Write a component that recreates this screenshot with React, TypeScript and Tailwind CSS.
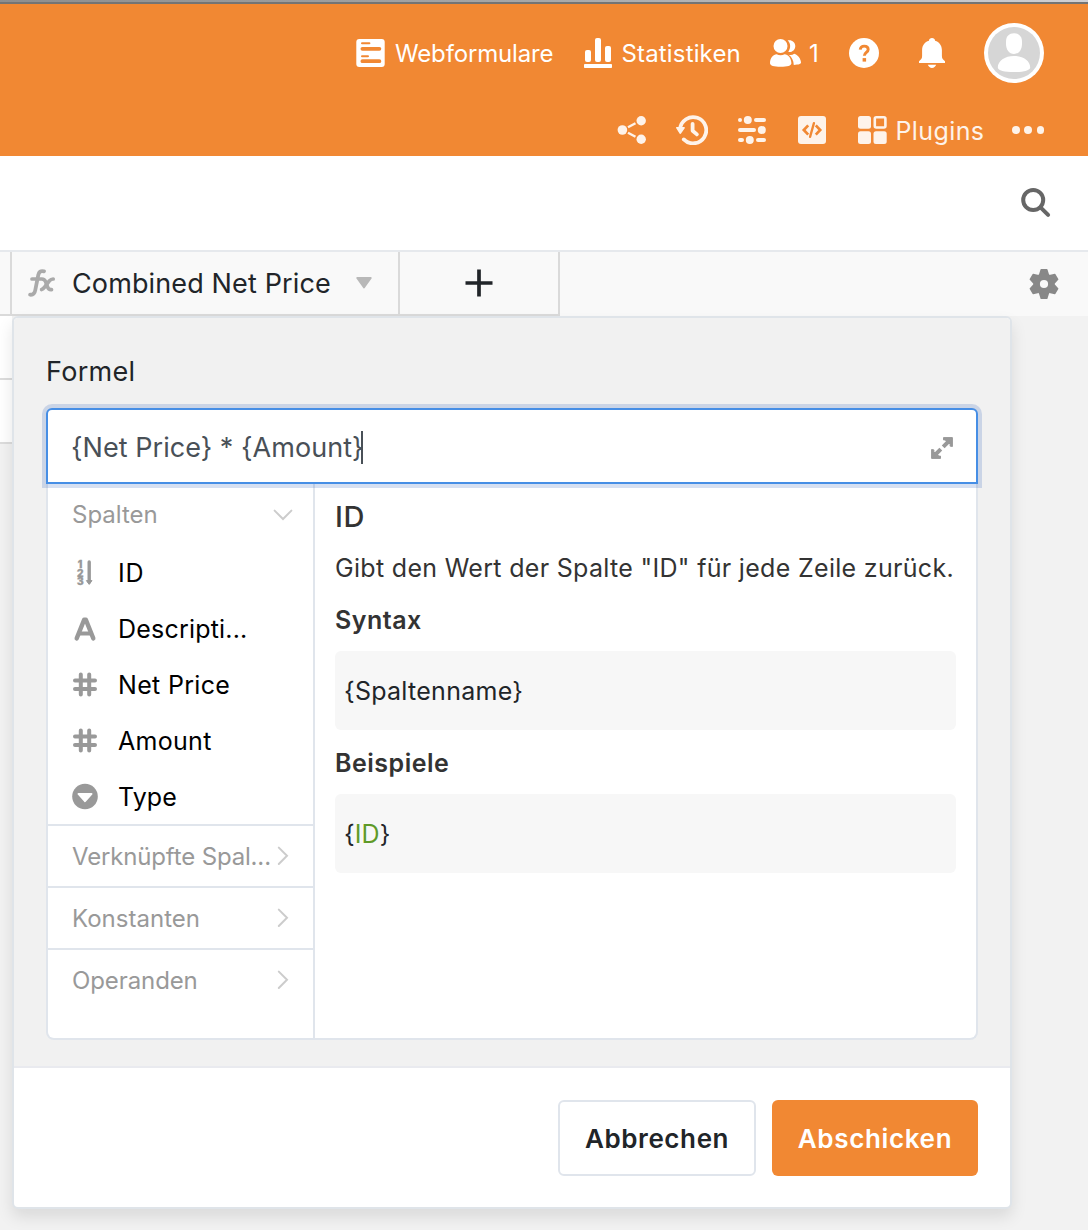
import React from "react";

function FormIcon() {
  return (
    <svg className="h-7 w-[29px] shrink-0" viewBox="0 0 29 28">
      <rect x="0.3" width="28.4" height="28" rx="3" fill="#fff" />
      <g stroke="#f18833" strokeLinecap="round">
        <path d="M6 4.2h7.4M6 17.2h6" strokeWidth="2" />
        <path d="M6.4 9.8h17M6.4 22.2h17" strokeWidth="3.8" />
      </g>
    </svg>
  );
}

function ChartIcon() {
  return (
    <svg className="h-[30px] w-7 shrink-0" viewBox="0 0 28 30" fill="#fff">
      <rect x="0" y="26" width="28" height="4" rx="0.8" />
      <rect x="1" y="12" width="6" height="12" rx="2" />
      <rect x="11" y="0" width="6" height="24" rx="2" />
      <rect x="21" y="8" width="6" height="16" rx="2" />
    </svg>
  );
}

function UsersIcon() {
  return (
    <svg className="h-7 w-8 shrink-0" viewBox="0 0 32 28" fill="#fff">
      <circle cx="10.5" cy="7" r="7" />
      <path d="M0 24.2C0 18.5 3.4 15.4 6.6 15.2c2.4 1.3 5.6 1.3 8 0 3.4.2 6.6 3.4 6.8 9 0 2.4-4 3.6-10.7 3.6S0 26.600 0 24.200Z" />
      <path d="M17.600 1.300c4.200-.9 7.700 1.900 7.700 5.700 0 4-3.500 6.700-7 6 2.700-4.200 2.500-8.500-.7-11.700Z" />
      <path d="M18.600 15.800c2 .6 4 .3 5.600-1 3.600 1 6.600 4.900 6.800 8.800.1 1.400-2.500 2.200-7.200 2.300-.2-4.400-2.100-8-5.200-10.100Z" />
    </svg>
  );
}

function HelpIcon() {
  return (
    <svg className="h-[30px] w-[30px] shrink-0" viewBox="0 0 30 30">
      <circle cx="15" cy="15" r="15" fill="#fff" />
      <path d="M11.200 11.600c.3-2.200 1.800-3.500 4-3.500 2.400 0 4 1.300 4 3.300 0 3-3.900 3-3.900 6.400" fill="none" stroke="#f18833" strokeWidth="2.900" />
      <rect x="13.600" y="20.100" width="3.500" height="3.500" fill="#f18833" />
    </svg>
  );
}

function BellIcon() {
  return (
    <svg className="h-[30px] w-[26px] shrink-0" viewBox="0 0 26 30" fill="#fff">
      <path d="M13 0c1.700 0 2.900 1 3.100 2.700 4.200 1.300 6.800 4.700 6.800 9.300v6c0 2.600 1.100 3.600 3.100 5.300V25H0v-1.700c2-1.700 3.100-2.700 3.100-5.300v-6c0-4.600 2.600-8 6.800-9.300C10.100 1 11.300 0 13 0Z" />
      <path d="M8.800 26.800h8.400c-.8 2-2.300 3.100-4.200 3.100s-3.400-1.100-4.200-3.100Z" />
    </svg>
  );
}

function Avatar() {
  return (
    <svg className="h-[60px] w-[60px] shrink-0" viewBox="0 0 60 60">
      <circle cx="30" cy="30" r="30" fill="#fff" />
      <circle cx="30" cy="30" r="26" fill="#d6d6d6" />
      <path d="M30 10.200c4.800 0 8 3 8 8.300v2c0 6-3 10.500-8 10.500s-8-4.500-8-10.500v-2c0-5.300 3.200-8.300 8-8.300Z" fill="#fff" />
      <path d="M13.800 44.500c0-6.600 7-11.500 16.200-11.500s16.200 4.900 16.200 11.500c0 3-6.800 4.600-16.200 4.600s-16.200-1.600-16.200-4.600Z" fill="#fff" />
    </svg>
  );
}

function ShareIcon() {
  return (
    <svg className="h-7 w-[30px] shrink-0" viewBox="0 0 30 28" fill="#fef3ea">
      <circle cx="5.400" cy="14" r="4.800" />
      <circle cx="24.200" cy="4.700" r="4.700" />
      <circle cx="24.200" cy="23.300" r="4.700" />
      <path d="M11 11.200l7.500-4M11 16.800l7.500 4" stroke="#fef3ea" strokeWidth="2.400" />
    </svg>
  );
}

function HistoryIcon() {
  return (
    <svg className="h-[30px] w-8 shrink-0" viewBox="0 0 32 30" fill="none" stroke="#fef3ea">
      <path d="M4.100 14A13.100 13.100 0 1 1 7.800 24.400" strokeWidth="3.800" strokeLinecap="round" />
      <path d="M1 12.800h7L4.300 18Z" fill="#fef3ea" strokeWidth="1.800" strokeLinejoin="round" />
      <path d="M16.600 8.800v7l4.300 3.600" strokeWidth="3.800" strokeLinecap="round" strokeLinejoin="round" />
    </svg>
  );
}

function SlidersIcon() {
  return (
    <svg className="h-7 w-7 shrink-0" viewBox="0 0 28 28" fill="#fef3ea">
      <rect x="0" y="2" width="4" height="4" rx="2" />
      <circle cx="9.800" cy="4" r="4" />
      <rect x="16" y="2" width="12" height="4" rx="2" />
      <rect x="0" y="12" width="18" height="4" rx="2" />
      <circle cx="23.800" cy="14" r="4" />
      <rect x="0" y="22" width="6" height="4" rx="2" />
      <circle cx="11.800" cy="24" r="4" />
      <rect x="18" y="22" width="10" height="4" rx="2" />
    </svg>
  );
}

function CodeIcon() {
  return (
    <svg className="h-7 w-7 shrink-0" viewBox="0 0 28 28">
      <rect width="28" height="28" rx="3" fill="#fef3ea" />
      <g fill="none" stroke="#f18833" strokeWidth="2.700">
        <path d="M10.200 9.400L5.800 14l4.400 4.600M17.800 9.400l4.400 4.600-4.400 4.600" />
        <path d="M15.900 7.200l-3.800 13.600" strokeWidth="2.400" strokeLinecap="round" />
      </g>
    </svg>
  );
}

function PluginsIcon() {
  return (
    <svg className="h-7 w-[29px] shrink-0" viewBox="0 0 29 28" fill="#fef3ea">
      <rect x="0" y="0" width="13" height="12.800" rx="2.500" />
      <rect x="16.800" y="1.300" width="10.600" height="10.200" rx="1.500" fill="none" stroke="#fef3ea" strokeWidth="2.600" />
      <rect x="0" y="15.200" width="13" height="12.800" rx="2.500" />
      <rect x="15.500" y="15.200" width="13.200" height="12.800" rx="2.500" />
    </svg>
  );
}

function SearchIcon() {
  return (
    <svg className="h-[30px] w-[30px]" viewBox="0 0 30 30" fill="none" stroke="#666" strokeWidth="4">
      <circle cx="12.200" cy="12" r="10" />
      <path d="M19.500 19.300l7.600 7.600" strokeLinecap="round" />
    </svg>
  );
}

function FormulaIcon({ className }: { className: string }) {
  return (
    <svg className={className} viewBox="0 0 28 28" fill="none" stroke="#aaa" strokeLinecap="round">
      <path d="M16 2.300c-3.400-.9-5 .6-5.700 3.700L7.300 21c-.6 3.400-2.300 5-5.200 4.700" strokeWidth="3.800" />
      <path d="M4 10h9.800c2.200 0 3 .6 3.800 2.700l1.900 5.200c.8 2.200 1.700 2.900 4 2.700" strokeWidth="3.700" />
      <path d="M25.200 10c-1.700 0-2.600.5-3.900 2l-4.700 6.200c-1 1.300-1.700 2-3 2.300" strokeWidth="3.700" />
    </svg>
  );
}

function GearIcon() {
  return (
    <svg className="h-[30px] w-[30px]" viewBox="-15 -15 30 30" fill="#888">
      {[0, 60, 120, 180, 240, 300].map((a) => (
        <path key={a} d="M-5.200-9L-3.500-14.400Q-3.400-14.900-2.800-14.900H2.800Q3.400-14.900 3.500-14.400L5.200-9Z" transform={`rotate(${a})`} />
      ))}
      <circle r="7.400" fill="none" stroke="#888" strokeWidth="6.600" />
    </svg>
  );
}

function ExpandIcon() {
  return (
    <svg className="mb-px h-[22px] w-[22px] translate-y-px" viewBox="0 0 22 22" fill="#999" stroke="#999">
      <path d="M12.500.6h8.900v8.900l-2.300-.4V7.100l-1.700-1.700-1-.2-2.200-2.300h-1.700Z" strokeWidth="1" strokeLinejoin="round" />
      <path d="M9.500 21.400H.6v-8.900l2.300.4v2l1.700 1.700 1 .2 2.200 2.300h1.700Z" strokeWidth="1" strokeLinejoin="round" />
      <path d="M18.500 3.500l-6.300 6.300M3.500 18.500l6.300-6.300" strokeWidth="4" />
    </svg>
  );
}

function ChevronDown() {
  return (
    <svg className="h-3 w-5 shrink-0" viewBox="0 0 20 12" fill="none" stroke="#ccc" strokeWidth="2">
      <path d="M1.600 1.600L10 10l8.400-8.400" strokeLinecap="round" />
    </svg>
  );
}

function ChevronRight() {
  return (
    <svg className="h-5 w-3 shrink-0" viewBox="0 0 12 20" fill="none" stroke="#ccc" strokeWidth="2">
      <path d="M1.800 1.600L10 9.800l-8.200 8.200" strokeLinecap="round" />
    </svg>
  );
}

function AutoNumberIcon() {
  return (
    <svg className="h-7 w-7" viewBox="0 0 28 28" fill="#999">
      <g fontFamily="Inter, sans-serif" fontWeight="900" fontSize="10" textAnchor="middle" stroke="#999" strokeWidth="0.300">
        <text x="9" y="8.600">1</text>
        <text x="9.300" y="17.500">2</text>
        <text x="9.300" y="26">3</text>
      </g>
      <path d="M18.200 3v20" stroke="#999" strokeWidth="3.400" strokeLinecap="round" />
      <path d="M15.400 21.600h5.600l-2.800 3.800Z" stroke="#999" strokeWidth="1" strokeLinejoin="round" />
    </svg>
  );
}

function TextIcon() {
  return (
    <svg className="h-7 w-7" viewBox="0 0 28 28" fill="none" stroke="#999" strokeWidth="4.400" strokeLinecap="round" strokeLinejoin="round">
      <path d="M5.700 23.400L13.200 4.600h1.600l7.500 18.800" />
      <path d="M8.600 18.500h10.800" strokeWidth="3.800" />
    </svg>
  );
}

function HashIcon() {
  return (
    <svg className="h-7 w-7" viewBox="0 0 28 28" fill="none" stroke="#999" strokeWidth="4" strokeLinecap="round">
      <path d="M9.800 3.600v20M18.200 3.600v20M4 9.600h20M4 18h20" />
    </svg>
  );
}

function SelectIcon() {
  return (
    <svg className="h-7 w-7" viewBox="0 0 28 28">
      <circle cx="14" cy="13.500" r="12.800" fill="#999" />
      <path d="M7.500 10.900h13L14 18.200Z" fill="#fff" stroke="#fff" strokeWidth="2" strokeLinejoin="round" />
    </svg>
  );
}

const columns = [
  { name: "ID", icon: <AutoNumberIcon />, cls: "tracking-[0.8px]" },
  { name: "Descripti...", icon: <TextIcon />, cls: "tracking-[0.2px]" },
  { name: "Net Price", icon: <HashIcon />, cls: "tracking-[0.32px]" },
  { name: "Amount", icon: <HashIcon />, cls: "tracking-[0.3px]" },
  { name: "Type", icon: <SelectIcon />, cls: "tracking-[0.1px]" },
];

const groups = [
  { name: "Verknüpfte Spal...", cls: "tracking-[-0.16px]" },
  { name: "Konstanten", cls: "tracking-[0.02px]" },
  { name: "Operanden", cls: "tracking-[-0.1px]" },
];

function Header() {
  return (
    <header className="h-[156px]">
      <div className="h-[2px] bg-linear-to-r from-[#8e8e8e] via-[#a8a8a8] to-[#d0d0d4]" />
      <div className="h-[2px] bg-[#747474]" />
      <div className="h-[152px] bg-[#f18833] text-[24px] text-white">
        <div className="flex h-[98px] items-center pl-[356px]">
          <div className="flex w-[228px] items-center gap-[10px]">
            <FormIcon />
            <span className="pt-[2px] tracking-[-0.160px]">Webformulare</span>
          </div>
          <div className="flex w-[186px] items-center gap-[9.500px]">
            <ChartIcon />
            <span className="pt-[2px] tracking-[0.160px]">Statistiken</span>
          </div>
          <div className="flex w-[79px] items-center gap-[7px]">
            <UsersIcon />
            <span className="pt-[2px]">1</span>
          </div>
          <div className="w-[70px]"><HelpIcon /></div>
          <div className="w-[65px]"><BellIcon /></div>
          <Avatar />
        </div>
        <div className="flex h-[54px] items-center pt-[2px] pl-[617px] text-[25px] text-[#fef3ea]">
          <div className="w-[59px]"><ShareIcon /></div>
          <div className="w-[62px]"><HistoryIcon /></div>
          <div className="w-[59.500px]"><SlidersIcon /></div>
          <div className="w-[60px]"><CodeIcon /></div>
          <div className="flex w-[154.500px] items-center gap-[9px]">
            <PluginsIcon />
            <span className="pt-[3px] tracking-[0.400px]">Plugins</span>
          </div>
          <div className="flex gap-[4.800px]">
            <i className="size-[7.500px] rounded-full bg-[#fef3ea]" />
            <i className="size-[7.500px] rounded-full bg-[#fef3ea]" />
            <i className="size-[7.500px] rounded-full bg-[#fef3ea]" />
          </div>
        </div>
      </div>
    </header>
  );
}

function TableHead() {
  return (
    <div className="flex h-[66px] border-t-2 border-[#e6e9ed] bg-[#f9f9f9]">
      <div className="w-3 border-r-2 border-b-2 border-[#dadada]" />
      <div className="flex w-[388px] items-center border-r-2 border-b-2 border-[#dadada] pl-4 text-[27px] text-[#212529]">
        <FormulaIcon className="h-7 w-7" />
        <span className="ml-4 w-[283.500px] pt-[2px] tracking-[0.130px]">Combined Net Price</span>
        <svg className="h-3 w-4" viewBox="0 0 16 12">
          <path d="M1.200 1h13.600L8 10.500Z" fill="#b8b8b8" stroke="#b8b8b8" strokeWidth="1.800" strokeLinejoin="round" />
        </svg>
      </div>
      <div className="flex w-40 items-center justify-center border-r-2 border-b-2 border-[#dadada]">
        <svg className="h-7 w-7" viewBox="0 0 28 28">
          <path d="M14 0.500v27M0.500 14h27" stroke="#212529" strokeWidth="3.700" />
        </svg>
      </div>
      <div className="flex grow items-center justify-end pr-[29px]">
        <GearIcon />
      </div>
    </div>
  );
}

function FormulaPanel() {
  return (
    <div className="flex h-[556px] rounded-b-lg border-2 border-t-0 border-[#e0e5ec] bg-white">
      <div className="w-[267px] shrink-0 border-r-2 border-[#e0e5ec]">
        <div className="flex h-[61px] items-center justify-between pr-5 pl-6 text-[24px] text-[#999]">
          <span>Spalten</span>
          <ChevronDown />
        </div>
        <div className="h-[281px] border-b-2 border-[#e0e5ec] text-[25px] text-black">
          {columns.map((c) => (
            <div key={c.name} className="flex h-14 items-center gap-[19px] pl-[23px]">
              {c.icon}
              <span className={`${c.cls} pt-[2px]`}>{c.name}</span>
            </div>
          ))}
        </div>
        {groups.map((g) => (
          <div
            key={g.name}
            className="flex h-[62px] items-center justify-between border-b-2 border-[#e0e5ec] pr-[24px] pl-6 text-[24px] text-[#999] last:border-b-0 last:pb-[2px]"
          >
            <span className={`${g.cls} pt-[2px] whitespace-nowrap`}>{g.name}</span>
            <ChevronRight />
          </div>
        ))}
      </div>
      <div className="grow pt-[11px] pr-5 pl-5 text-[25px] text-[#333]">
        <h2 className="h-[44px] text-[29px] leading-[44px] font-medium tracking-[0.500px]">ID</h2>
        <p className="mt-[11px] h-9 leading-9 tracking-[0.310px] whitespace-nowrap">Gibt den Wert der Spalte "ID" für jede Zeile zurück.</p>
        <h3 className="mt-4 h-9 leading-9 font-semibold tracking-[0.500px]">Syntax</h3>
        <div className="mt-[13px] h-[79px] rounded-md bg-[#f7f7f7] pl-[9px] leading-[80px] tracking-[0.270px] text-[#212529]">{"{Spaltenname}"}</div>
        <h3 className="mt-[15px] h-9 leading-9 font-semibold tracking-[0.500px]">Beispiele</h3>
        <div className="mt-[13px] h-[79px] rounded-md bg-[#f7f7f7] pl-[9px] leading-[80px] tracking-[0.100px] text-[#212529]">
          {"{"}<span className="text-[#5f9a28]">ID</span>{"}"}
        </div>
      </div>
    </div>
  );
}

function FormulaDialog() {
  return (
    <section className="absolute top-[316px] left-3 flex h-[893px] w-[1000px] flex-col overflow-visible rounded-[6px] border-2 border-[#dfe4e9] bg-white shadow-[0_8px_16px_rgba(0,0,0,0.1)]">
      <div className="h-[750px] rounded-t-[4px] border-b-2 border-[#e9eaef] bg-[#f1f1f1] px-8 pt-9">
        <label className="block h-9 text-[27px] leading-9 tracking-[0.300px] text-[#212529]">Formel</label>
        <div className="relative z-10 mt-[18px] flex h-[76px] items-center justify-between rounded-t-[6px] border-2 border-[#468ee5] bg-white pt-[2px] pr-[23px] pl-[23px] shadow-[0_0_0_4px_rgba(50,100,190,0.2)]">
          <div className="flex items-center text-[27px] text-[#495057]">
            <span className="pt-[2px] tracking-[0.040px] whitespace-nowrap">{"{Net Price} * {Amount}"}</span>
            <i className="-ml-[3px] h-[33px] w-[2px] bg-[#495057]" />
          </div>
          <ExpandIcon />
        </div>
        <FormulaPanel />
      </div>
      <div className="flex justify-end gap-4 pt-8 pr-8 text-[26px] font-semibold">
        <button className="h-[76px] w-[198px] rounded-md border-2 border-[#e0e5ec] bg-white tracking-[0.600px] text-[#212529]">Abbrechen</button>
        <button className="h-[76px] w-[206px] rounded-md bg-[#f18833] tracking-[0.650px] text-white">Abschicken</button>
      </div>
    </section>
  );
}

export default function App() {
  return (
    <main className="relative h-[1230px] w-[1088px] overflow-hidden bg-[#f2f2f2] font-['Inter',sans-serif]">
      <Header />
      <div className="flex h-[94px] items-center justify-end bg-white pr-[37px]">
        <SearchIcon />
      </div>
      <TableHead />
      <div className="h-16 w-3 border-b-2 border-[#dcdcdc] bg-white" />
      <div className="h-16 w-3 border-b-2 border-[#dcdcdc] bg-white" />
      <FormulaDialog />
    </main>
  );
}
